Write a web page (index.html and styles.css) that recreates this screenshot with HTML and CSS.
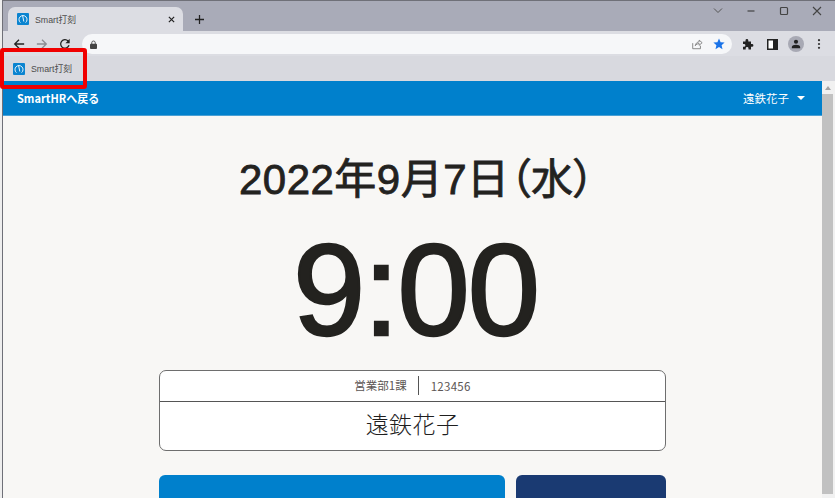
FILE: index.html
```html
<!DOCTYPE html>
<html lang="ja">
<head>
<meta charset="utf-8">
<title>Smart打刻</title>
<link rel="stylesheet" href="styles.css">
</head>
<body>
<div class="window">
  <div class="tabstrip">
    <div class="tab">
      <svg class="favicon" viewBox="0 0 12 12"><rect width="12" height="12" rx="1" fill="#0a84d0"/><path d="M3.400 9.600A4 4 0 1 1 8.600 9.600M5.600 2.600L6.800 8.500" fill="none" stroke="#fff" stroke-width=".9"/></svg>
      <span class="tab-title">Smart打刻</span>
      <svg class="tab-close" viewBox="0 0 8 8"><path d="M1 1L7 7M7 1L1 7" stroke="#222" stroke-width="1.4"/></svg>
    </div>
    <svg class="new-tab" viewBox="0 0 10 10"><path d="M5 0V10M0 5H10" stroke="#222" stroke-width="1.4"/></svg>
    <div class="win-controls">
      <svg class="win-icon" viewBox="0 0 12 12"><path d="M2 3.500L6 7.500L10 3.500" fill="none" stroke="#555" stroke-width="1"/></svg>
      <svg class="win-icon" viewBox="0 0 12 12"><path d="M2.500 6H9.500" stroke="#444" stroke-width="1.200"/></svg>
      <svg class="win-icon" viewBox="0 0 12 12"><rect x="2.500" y="2.500" width="7" height="7" rx="1" fill="none" stroke="#444" stroke-width="1.200"/></svg>
      <svg class="win-icon" viewBox="0 0 12 12"><path d="M2 2L10 10M10 2L2 10" stroke="#444" stroke-width="1.100"/></svg>
    </div>
  </div>
  <div class="toolbar">
    <svg class="nav-icon" viewBox="0 0 14 14"><path d="M13 7H2M7 2L2 7L7 12" fill="none" stroke="#222" stroke-width="1.500"/></svg>
    <svg class="nav-icon" viewBox="0 0 14 14"><path d="M1 7H12M7 2L12 7L7 12" fill="none" stroke="#8b8c92" stroke-width="1.500"/></svg>
    <svg class="nav-icon" viewBox="0 0 14 14"><path d="M11.700 8.500A5 5 0 1 1 10.600 3.500" fill="none" stroke="#222" stroke-width="1.500"/><path d="M12.500 1V6H7.500Z" fill="#222"/></svg>
    <div class="omnibox">
      <svg class="lock" viewBox="0 0 8 10"><path d="M2 4.500V3a2 2 0 0 1 4 0V4.500" fill="none" stroke="#444" stroke-width="1"/><rect y="4" width="8" height="6" rx="1" fill="#444"/></svg>
      <svg class="share" viewBox="0 0 14 14"><path d="M2 6V12.500H11V9" fill="none" stroke="#777" stroke-width="1"/><path d="M5 9C5.500 6 7.500 4.500 9.500 4.500V2.500L13 5.500L9.500 8.500V6.500C7.500 6.500 6 7.500 5 9Z" fill="none" stroke="#777" stroke-width="1"/></svg>
      <svg class="star" viewBox="0 0 12 12"><path d="M6 .5L7.600 4.200L11.600 4.500L8.600 7.200L9.500 11.200L6 9.100L2.500 11.200L3.400 7.200L.4 4.500L4.400 4.200Z" fill="#1a73e8"/></svg>
    </div>
    <svg class="puzzle" viewBox="0 0 12 12"><path d="M1 3.500H3.500V2.500A1.400 1.400 0 0 1 6.300 2.500V3.500H9V6H10A1.400 1.400 0 0 1 10 8.800H9V11.500H6.500V10.500A1.300 1.300 0 0 0 3.700 10.500V11.500H1V8.800H2A1.400 1.400 0 0 0 2 6H1Z" fill="#222"/></svg>
    <svg class="panel" viewBox="0 0 11 11"><path d="M.75.75H10.250V10.250H.75Z" fill="#fff" stroke="#222" stroke-width="1.500"/><rect x="6" y="1" width="4" height="9" fill="#222"/></svg>
    <div class="avatar"><svg viewBox="0 0 12 12"><circle cx="6" cy="3.300" r="2.500" fill="#222"/><path d="M1 11V9.500C1 8 3.500 7 6 7S11 8 11 9.500V11Z" fill="#222"/></svg></div>
    <svg class="kebab" viewBox="0 0 4 14"><circle cx="2" cy="2.500" r="1.300" fill="#333"/><circle cx="2" cy="7" r="1.300" fill="#333"/><circle cx="2" cy="11.500" r="1.300" fill="#333"/></svg>
  </div>
  <div class="bookmarks">
    <svg class="favicon" viewBox="0 0 12 12"><rect width="12" height="12" rx="1" fill="#0a84d0"/><path d="M3.400 9.600A4 4 0 1 1 8.600 9.600M5.600 2.600L6.800 8.500" fill="none" stroke="#fff" stroke-width=".9"/></svg>
    <span class="bookmark-title">Smart打刻</span>
  </div>
  <div class="viewport">
    <div class="page">
      <header class="appbar">
        <a class="back">SmartHRへ戻る</a>
        <span class="user">遠鉄花子<i class="caret"></i></span>
      </header>
      <main class="content">
        <div class="date">2022年9月7日（水）</div>
        <div class="time">9:00</div>
        <section class="card">
          <div class="card-meta"><span class="dept">営業部1課</span><span class="empno">123456</span></div>
          <div class="card-name">遠鉄花子</div>
        </section>
        <div class="actions">
          <div class="btn btn-primary"></div>
          <div class="btn btn-secondary"></div>
        </div>
      </main>
    </div>
    <div class="scrollbar">
      <div class="scroll-up"><i></i></div>
      <div class="scroll-thumb"></div>
    </div>
  </div>
</div>
<div class="highlight"></div>
</body>
</html>
```
FILE: styles.css
```css
* { box-sizing: border-box; }
html, body { margin: 0; height: 100%; overflow: hidden; }
body { font-family: "Noto Sans CJK JP", "Noto Sans", sans-serif; background: #eeeeee; }
svg { display: block; flex: none; }

.window {
  width: 833px; height: 498px; margin-left: 2px; display: flex; flex-direction: column;
  border-top: 1px solid #6f7078; border-left: 1px solid #6f7078;
  overflow: hidden;
}

.tabstrip { height: 30px; flex: none; background: #a9abb8; display: flex; align-items: flex-end; padding-left: 5px; }
.tab {
  width: 175px; height: 24px; background: #dcdde3; border-radius: 7px 7px 0 0;
  display: flex; align-items: center; padding: 0 8px 0 9px;
}
.tab .favicon { margin-right: 6px; }
.favicon { width: 12px; height: 12px; }
.tab-title { font-size: 8.800px; color: #4c4c4c; flex: 1; font-family: "Liberation Sans", "Noto Sans CJK JP", sans-serif; }
.tab-close { width: 7px; height: 7px; }
.new-tab { width: 9px; height: 9px; margin: 0 0 7px 12px; }
.win-controls { margin-left: auto; display: flex; gap: 21px; align-self: flex-start; padding: 4px 12px 0 0; }
.win-icon { width: 12px; height: 12px; }

.toolbar { height: 25px; padding-top: 1px; flex: none; background: #dcdde3; display: flex; align-items: center; padding-left: 10px; }
.nav-icon { width: 12px; height: 12px; margin-right: 11px; }
.omnibox {
  width: 650px; height: 20px; background: #f6f7f9; border-radius: 10px;
  display: flex; align-items: center; padding: 0 7px 0 8px;
}
.lock { width: 7px; height: 9px; }
.share { width: 12px; height: 12px; margin-left: auto; margin-right: 10px; }
.star { width: 12px; height: 12px; }
.puzzle { width: 12px; height: 12px; margin-left: 10px; }
.panel { width: 11px; height: 11px; margin-left: 13px; }
.avatar {
  width: 16px; height: 16px; margin-left: 10px; border-radius: 50%; background: #a8a9b4;
  display: flex; align-items: center; justify-content: center;
}
.avatar svg { width: 10px; height: 10px; }
.kebab { width: 4px; height: 12px; margin-left: 13px; }

.bookmarks { height: 25px; flex: none; background: #d8d9df; display: flex; align-items: center; padding-left: 10px; }
.bookmark-title { font-size: 8.800px; color: #4c4c4c; margin-left: 6px; font-family: "Liberation Sans", "Noto Sans CJK JP", sans-serif; }

.viewport { flex: 1; min-height: 0; display: flex; }
.page { width: 819px; flex: none; background: #f8f7f5; overflow: hidden; }

.appbar {
  height: 35px; background: #0080cc; color: #fff; display: flex; align-items: center;
  justify-content: space-between; padding: 0 17px 0 14px;
  border-bottom: 1px solid #4aa0d4;
}
.back { font-size: 11px; font-weight: 700; }
.user { font-size: 11.500px; display: flex; align-items: center; }
.caret { width: 0; height: 0; margin-left: 8px; border: 4px solid transparent; border-top: 4px solid #fff; border-bottom: 0; }

.content { display: flex; flex-direction: column; align-items: center; color: #23221f; }
.date {
  font-family: "Liberation Sans", "Noto Sans CJK JP", sans-serif;
  font-feature-settings: "palt"; font-size: 42px; line-height: 60px; margin: 34px 0 0 9px; white-space: nowrap;
  letter-spacing: .5px; -webkit-text-stroke: .8px #23221f;
}
.time {
  font-family: "Liberation Sans", sans-serif; font-size: 130px; line-height: 130px; margin: 15px 0 0 6px;
  letter-spacing: -2px; -webkit-text-stroke: 2.400px #23221f;
}

.card {
  width: 507px; height: 81px; margin-top: 15px; background: #fff; border: 1px solid #6e6e6e; border-radius: 7px;
  display: flex; flex-direction: column;
}
.card-meta { height: 31px; flex: none; border-bottom: 1px solid #555; display: flex; align-items: center; justify-content: center; font-size: 11.500px; color: #5c5654; padding-bottom: 1px; }
.dept { padding-right: 11px; border-right: 1px solid #555; line-height: 19px; }
.empno { padding-left: 12px; letter-spacing: .3px; }
.card-name { flex: 1; display: flex; align-items: center; justify-content: center; padding-bottom: 6px; font-size: 23px; font-weight: 300; color: #1f1f1f; letter-spacing: .4px; }

.actions { width: 507px; display: flex; gap: 11px; margin-top: 24px; }
.btn { height: 60px; border-radius: 6px 6px 0 0; }
.btn-primary { flex: 1; background: #0080cc; }
.btn-secondary { width: 150px; background: #1a3a72; }

.scrollbar { width: 13px; flex: none; background: #f1f1f1; display: flex; flex-direction: column; padding-right: 2px; }
.scroll-up { height: 13px; display: flex; align-items: center; justify-content: center; }
.scroll-up i { width: 0; height: 0; border: 3.500px solid transparent; border-bottom: 4px solid #a3a3a3; border-top: 0; }
.scroll-thumb { height: 400px; background: #c1c1c1; }

.highlight { position: absolute; left: 0; top: 48px; width: 87px; height: 41px; border: 4px solid #f00000; border-radius: 3px; pointer-events: none; }
```
